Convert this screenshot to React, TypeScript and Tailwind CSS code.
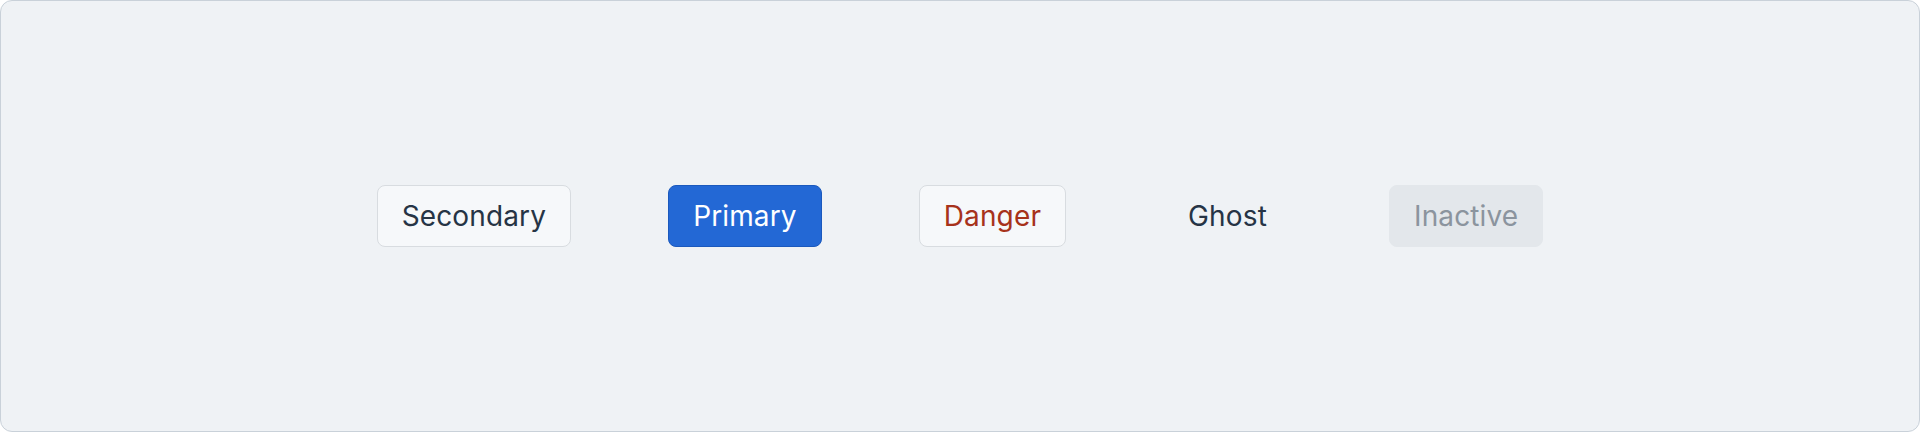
export default function App() {
  const base =
    "h-[62px] px-6 flex items-center rounded-lg border text-[28px] font-normal tracking-[0.005em] leading-none";

  return (
    <div
      className="h-[432px] w-[1920px] rounded-xl border border-[#c9d1d9] bg-[#eff2f5] flex items-center justify-center gap-[97px]"
      style={{ fontFamily: "Inter, 'Noto Sans', sans-serif" }}
    >
      <button className={`${base} border-[#d8dce0] bg-[#f6f8fa] text-[#263445]`}>
        Secondary
      </button>
      <button className={`${base} border-[#1b59bd] bg-[#2368d5] text-white`}>
        Primary
      </button>
      <button className={`${base} border-[#d8dce0] bg-[#f6f8fa] text-[#a7321b]`}>
        Danger
      </button>
      <button className={`${base} border-transparent bg-transparent text-[#263445]`}>
        Ghost
      </button>
      <button className={`${base} border-[#e3e7eb] bg-[#e3e7eb] text-[#8b949e]`} disabled>
        Inactive
      </button>
    </div>
  );
}
